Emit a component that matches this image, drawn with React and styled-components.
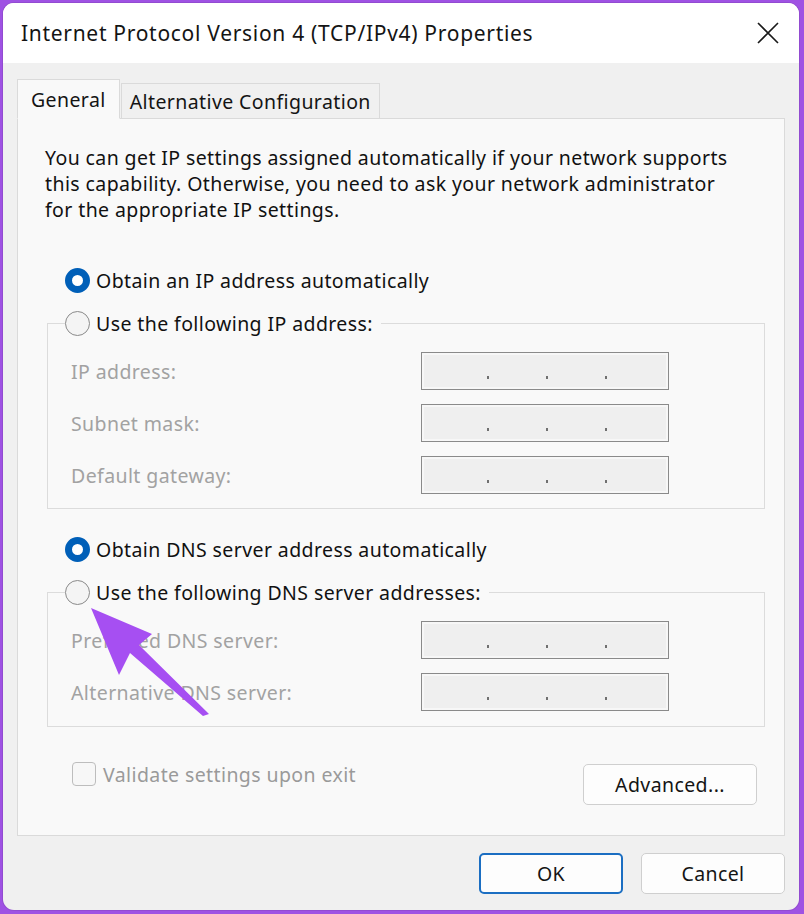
import styled, { createGlobalStyle } from "styled-components";

const GlobalStyle = createGlobalStyle`
  html, body {
    margin: 0;
    padding: 0;
    background: #9f52e3;
  }
  body {
    font-family: "Noto Sans", "Open Sans", sans-serif;
  }
`;

const ipRows = ["IP address:", "Subnet mask:", "Default gateway:"];
const dnsRows = ["Preferred DNS server:", "Alternative DNS server:"];

const App = () => {
  return (
    <>
      <GlobalStyle />
      <Window>
        <TitleBar>
          <Title>Internet Protocol Version 4 (TCP/IPv4) Properties</Title>
          <CloseBtn aria-label="Close">
            <svg width="22" height="22" viewBox="0 0 22 22">
              <path d="M1 1 L21 21 M21 1 L1 21" stroke="#1a1a1a" strokeWidth="1.6" fill="none" />
            </svg>
          </CloseBtn>
        </TitleBar>
        <Body>
          <Tabs>
            <Tab $active>General</Tab>
            <Tab>Alternative Configuration</Tab>
          </Tabs>
          <Panel>
            <Intro>
              You can get IP settings assigned automatically if your network supports
              <br />
              this capability. Otherwise, you need to ask your network administrator
              <br />
              for the appropriate IP settings.
            </Intro>

            <RadioRow $top={44}>
              <Radio $checked />
              Obtain an IP address automatically
            </RadioRow>

            <Group $top={30} $bottom={14}>
              <Legend>
                <Radio />
                Use the following IP address:
              </Legend>
              {ipRows.map((label) => (
                <FieldRow key={label} $gap={14}>
                  <FieldLabel>{label}</FieldLabel>
                  <IpBox>
                    <Dot />
                    <Dot />
                    <Dot />
                  </IpBox>
                </FieldRow>
              ))}
            </Group>

            <RadioRow $top={27}>
              <Radio $checked />
              Obtain DNS server address automatically
            </RadioRow>

            <Group $top={30} $bottom={15}>
              <Legend>
                <Radio />
                Use the following DNS server addresses:
              </Legend>
              {dnsRows.map((label) => (
                <FieldRow key={label} $gap={14}>
                  <FieldLabel>{label}</FieldLabel>
                  <IpBox>
                    <Dot />
                    <Dot />
                    <Dot />
                  </IpBox>
                </FieldRow>
              ))}
            </Group>

            <BottomRow>
              <CheckRow>
                <CheckBox />
                Validate settings upon exit
              </CheckRow>
              <Button $w={174}>Advanced...</Button>
            </BottomRow>
          </Panel>
          <Footer>
            <Button $w={144} $primary>
              OK
            </Button>
            <Button $w={144}>Cancel</Button>
          </Footer>
        </Body>
        <Annotation width="804" height="914" viewBox="0 0 804 914">
          <polygon
            points="91,608 152,634 139,645 209,714 203,716 130,653 119,675"
            fill="#a64ff2"
          />
        </Annotation>
      </Window>
    </>
  );
};

export default App;

const Window = styled.div`
  position: relative;
  margin: 3px 5px 4px 3px;
  height: 907px;
  background: #f0f0f0;
  border-radius: 11px;
  overflow: hidden;
  box-shadow: 0 0 0 1px rgba(0, 0, 0, 0.08);
  color: #111;
  font-size: 19.5px;
  letter-spacing: 0.4px;
`;

const TitleBar = styled.div`
  display: flex;
  justify-content: space-between;
  align-items: center;
  height: 60px;
  padding: 0 20px 0 18px;
  background: #ffffff;
`;

const Title = styled.span`
  font-size: 21px;
  letter-spacing: 0.7px;
  color: #141414;
`;

const CloseBtn = styled.button`
  display: flex;
  align-items: center;
  justify-content: center;
  padding: 0;
  border: 0;
  background: transparent;
`;

const Body = styled.div`
  display: flex;
  flex-direction: column;
  padding: 16px 14px 0 14px;
`;

const Tabs = styled.div`
  display: flex;
  align-items: flex-end;
  margin-bottom: -1px;
  position: relative;
  z-index: 1;
`;

const Tab = styled.div`
  display: flex;
  align-items: center;
  height: ${(p) => (p.$active ? "38px" : "34px")};
  padding: 0 ${(p) => (p.$active ? "13px" : "8px")};
  margin-left: ${(p) => (p.$active ? "0" : "1px")};
  background: ${(p) => (p.$active ? "#f9f9f9" : "#f0f0f0")};
  border: 1px solid #dadada;
  border-bottom: ${(p) => (p.$active ? "1px solid #f9f9f9" : "1px solid #dadada")};
  color: #141414;
`;

const Panel = styled.div`
  display: flex;
  flex-direction: column;
  height: 718px;
  box-sizing: border-box;
  padding: 26px 19px 0 29px;
  background: #f9f9f9;
  border: 1px solid #dadada;
`;

const Intro = styled.p`
  margin: 0 0 0 -2px;
  line-height: 26px;
`;

const RadioRow = styled.div`
  display: flex;
  align-items: center;
  gap: 6px;
  height: 26px;
  margin: ${(p) => p.$top}px 0 0 18px;
`;

const Radio = styled.span`
  box-sizing: border-box;
  width: 25px;
  height: 25px;
  border-radius: 50%;
  flex: none;
  background: ${(p) => (p.$checked ? "#ffffff" : "#f4f4f4")};
  border: ${(p) => (p.$checked ? "7.5px solid #005fb8" : "1px solid #8a8a8a")};
`;

const Group = styled.div`
  display: flex;
  flex-direction: column;
  margin-top: ${(p) => p.$top}px;
  padding: 0 0 ${(p) => p.$bottom}px 23px;
  border: 1px solid #dcdcdc;
`;

const Legend = styled.div`
  display: flex;
  align-items: center;
  gap: 6px;
  align-self: flex-start;
  height: 26px;
  margin: -14px 0 2px -6px;
  padding-right: 8px;
  background: #f9f9f9;
`;

const FieldRow = styled.div`
  display: flex;
  align-items: center;
  justify-content: space-between;
  margin-top: ${(p) => p.$gap}px;
  padding-right: 95px;
`;

const FieldLabel = styled.span`
  color: #a2a2a2;
`;

const IpBox = styled.div`
  display: flex;
  gap: 57px;
  box-sizing: border-box;
  width: 248px;
  height: 38px;
  padding: 23px 0 0 65px;
  background: #efefef;
  border: 1px solid #8a8a8a;
  box-shadow: inset 0 0 0 2px #f7f7f7;
`;

const Dot = styled.span`
  width: 2px;
  height: 3px;
  background: #707070;
`;

const BottomRow = styled.div`
  display: flex;
  justify-content: space-between;
  align-items: flex-start;
  margin-top: 36px;
  padding: 0 8px 0 25px;
`;

const CheckRow = styled.div`
  display: flex;
  align-items: center;
  gap: 7px;
  margin-top: -2px;
  color: #9a9a9a;
  height: 26px;
`;

const CheckBox = styled.span`
  box-sizing: border-box;
  width: 24px;
  height: 24px;
  border-radius: 4px;
  border: 1px solid #bdbdbd;
  background: #f7f7f7;
`;

const Button = styled.button`
  box-sizing: border-box;
  width: ${(p) => p.$w}px;
  height: 41px;
  margin-top: 1px;
  font-family: inherit;
  font-size: 19.5px;
  letter-spacing: 0.4px;
  color: #141414;
  background: #fdfdfd;
  border-radius: 5px;
  border: ${(p) => (p.$primary ? "2px solid #1b6ec2" : "1px solid #cfcfcf")};
`;

const Footer = styled.div`
  display: flex;
  justify-content: flex-end;
  gap: 18px;
  margin-top: 16px;
`;

const Annotation = styled.svg`
  position: absolute;
  left: -3px;
  top: -3px;
  pointer-events: none;
`;
